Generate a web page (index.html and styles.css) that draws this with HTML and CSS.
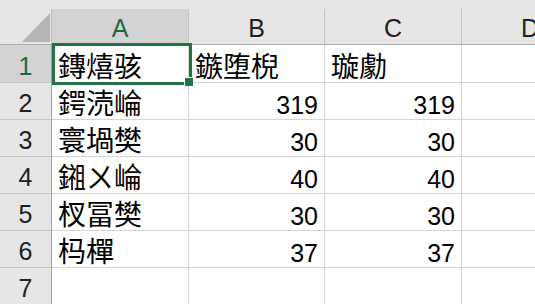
FILE: index.html
```html
<!DOCTYPE html>
<html lang="zh-CN">
<head>
    <meta charset="UTF-8">
    <meta name="viewport" content="width=device-width, initial-scale=1.0">
    <title>Sheet1</title>
    <link rel="stylesheet" href="styles.css">
</head>
<body>

    <div class="sheet">
        <div class="row head">
            <div class="corner">
                <svg width="51" height="35" viewBox="0 0 51 35"><polygon points="50,4 50,33 22,33" fill="#b5b5b5"/></svg>
            </div>
            <div class="col-h sel">A</div>
            <div class="col-h">B</div>
            <div class="col-h">C</div>
            <div class="col-h">D</div>
        </div>

        <div class="row first">
            <div class="row-h sel">1</div>
            <div class="cell txt">鏄熺骇</div>
            <div class="cell txt">鏃堕棿</div>
            <div class="cell txt">璇勮</div>
            <div class="cell"></div>
        </div>
        <div class="row">
            <div class="row-h">2</div>
            <div class="cell txt">鍔涜崘</div>
            <div class="cell num">319</div>
            <div class="cell num">319</div>
            <div class="cell"></div>
        </div>
        <div class="row">
            <div class="row-h">3</div>
            <div class="cell txt">寰堝樊</div>
            <div class="cell num">30</div>
            <div class="cell num">30</div>
            <div class="cell"></div>
        </div>
        <div class="row">
            <div class="row-h">4</div>
            <div class="cell txt">鎺ㄨ崘</div>
            <div class="cell num">40</div>
            <div class="cell num">40</div>
            <div class="cell"></div>
        </div>
        <div class="row">
            <div class="row-h">5</div>
            <div class="cell txt">杈冨樊</div>
            <div class="cell num">30</div>
            <div class="cell num">30</div>
            <div class="cell"></div>
        </div>
        <div class="row">
            <div class="row-h">6</div>
            <div class="cell txt">杩樿</div>
            <div class="cell num">37</div>
            <div class="cell num">37</div>
            <div class="cell"></div>
        </div>
        <div class="row">
            <div class="row-h">7</div>
            <div class="cell"></div>
            <div class="cell"></div>
            <div class="cell"></div>
            <div class="cell"></div>
        </div>

        <!-- active cell A1 -->
        <div class="selection"><span class="handle"></span></div>
    </div>

</body>
</html>
```

FILE: styles.css
```css
body {
    margin: 0;
    background: #fff;
    font-family: "Liberation Sans", "Noto Sans CJK SC", sans-serif;
    color: #000;
    overflow: hidden;
}

.sheet {
    position: relative;
    width: 535px;
    height: 304px;
    overflow: hidden;
}

.row {
    display: grid;
    grid-template-columns: 52px 137px 136px 137px 137px;
    height: 37px;
}

.row.first {
    height: 38px;
}

/* column headers */
.head {
    height: 45px;
    padding-top: 9px;
    box-sizing: border-box;
    background: #e6e6e6;
    border-bottom: 1px solid #ababab;
}

.corner {
    border-right: 1px solid #bdbdbd;
}

.corner svg {
    display: block;
}

.col-h {
    display: flex;
    align-items: flex-end;
    justify-content: center;
    padding-bottom: 2px;
    font-size: 25px;
    line-height: 28px;
    color: #222;
    border-right: 1px solid #c4c4c4;
}

.col-h.sel {
    background: #d3d3d3;
    color: #1d6b40;
}

/* row headers */
.row-h {
    display: flex;
    align-items: flex-end;
    justify-content: center;
    padding-bottom: 2px;
    font-size: 25px;
    line-height: 28px;
    color: #222;
    background: #e6e6e6;
    border-right: 1px solid #9f9f9f;
    border-bottom: 1px solid #c4c4c4;
}

.row-h.sel {
    background: #d3d3d3;
    color: #1d6b40;
}

/* cells */
.cell {
    display: flex;
    align-items: flex-end;
    border-right: 1px solid #d4d4d4;
    border-bottom: 1px solid #d4d4d4;
    white-space: nowrap;
}

.cell.txt {
    padding-left: 6px;
    font-family: "Noto Sans CJK SC", sans-serif;
    font-size: 28px;
    line-height: 34px;
}

.cell.num {
    justify-content: flex-end;
    padding-right: 6px;
    font-size: 25px;
    line-height: 28px;
}

/* active cell outline */
.selection {
    position: absolute;
    left: 52px;
    top: 43px;
    width: 140px;
    height: 42px;
    box-sizing: border-box;
    border: 3px solid #217346;
}

.handle {
    position: absolute;
    right: -4px;
    bottom: -4px;
    width: 8px;
    height: 8px;
    background: #217346;
    box-shadow: -1px -1px 0 0 #fff;
}
```
